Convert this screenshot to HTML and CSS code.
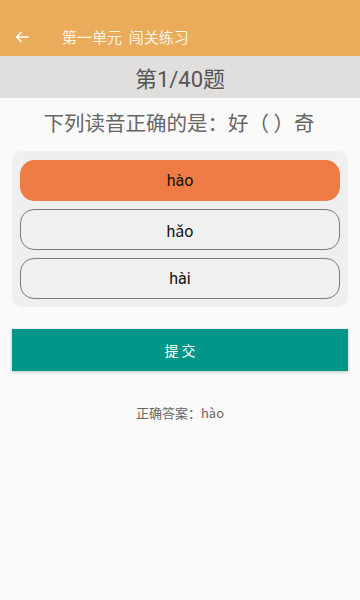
FILE: index.html
```html
<!DOCTYPE html>
<html lang="zh">
<head>
<meta charset="utf-8">
<link rel="stylesheet" href="styles.css">
</head>
<body>
<div class="page">
  <header class="appbar">
    <svg class="back" width="14" height="12" viewBox="0 0 14 12"><path d="M13.2 6H1.8M6 1.6L1.6 6l4.4 4.4" fill="none" stroke="#fff" stroke-width="1.6" stroke-linecap="round" stroke-linejoin="round"/></svg>
    <span class="title">第一单元&nbsp;&nbsp;闯关练习</span>
  </header>
  <div class="progress">第1/40题</div>
  <div class="question">下列读音正确的是：好（ ）奇</div>
  <div class="options">
    <div class="opt selected">hào</div>
    <div class="opt">hǎo</div>
    <div class="opt">hài</div>
  </div>
  <button class="submit">提 交</button>
  <div class="answer">正确答案：hào</div>
</div>
</body>
</html>
```
FILE: styles.css
```css
html, body {
  margin: 0;
  padding: 0;
  background: #fafafa;
}
body {
  font-family: Roboto, "Noto Sans CJK SC", sans-serif;
  width: 360px;
  height: 600px;
  overflow: hidden;
}
.page {
  display: flex;
  flex-direction: column;
}
.appbar {
  height: 56px;
  background: #eaab5b;
  display: flex;
  align-items: center;
  padding: 17px 0 0 15px;
  box-sizing: border-box;
}
.back {
  display: block;
}
.title {
  margin-left: 33px;
  color: #fdf5e6;
  font-size: 15px;
  font-family: "Noto Sans CJK SC", sans-serif;
}
.progress {
  height: 42px;
  background: #e0dfde;
  color: #555;
  font-size: 22px;
  display: flex;
  align-items: center;
  justify-content: center;
  font-family: Roboto, "Noto Sans CJK SC", sans-serif;
}
.question {
  height: 52px;
  display: flex;
  align-items: center;
  justify-content: center;
  color: #666;
  font-size: 20.5px;
  padding: 0 2px 4px 0;
  box-sizing: border-box;
  font-family: "Noto Sans CJK SC", sans-serif;
}
.options {
  margin: 1px 12px 0;
  background: #efefef;
  border-radius: 10px;
  padding: 9px 8px 8px;
  display: flex;
  flex-direction: column;
  gap: 8px;
}
.opt {
  height: 41px;
  box-sizing: border-box;
  border: 1.3px solid #7a7a7a;
  border-radius: 14px;
  background: #f0f0f0;
  display: flex;
  align-items: center;
  justify-content: center;
  font-size: 16px;
  color: #111;
}
.opt.selected {
  background: #ef7b45;
  border-color: #ef7b45;
}
.submit {
  margin: 22px 12px 0;
  height: 42px;
  border: none;
  border-radius: 0;
  background: #009688;
  color: #fff;
  font-size: 14px;
  font-family: "Noto Sans CJK SC", sans-serif;
  box-shadow: 0 1px 3px rgba(0,0,0,0.25);
}
.answer {
  margin-top: 32px;
  text-align: center;
  color: #666;
  font-size: 13px;
  font-family: "Noto Sans CJK SC", sans-serif;
}
```
